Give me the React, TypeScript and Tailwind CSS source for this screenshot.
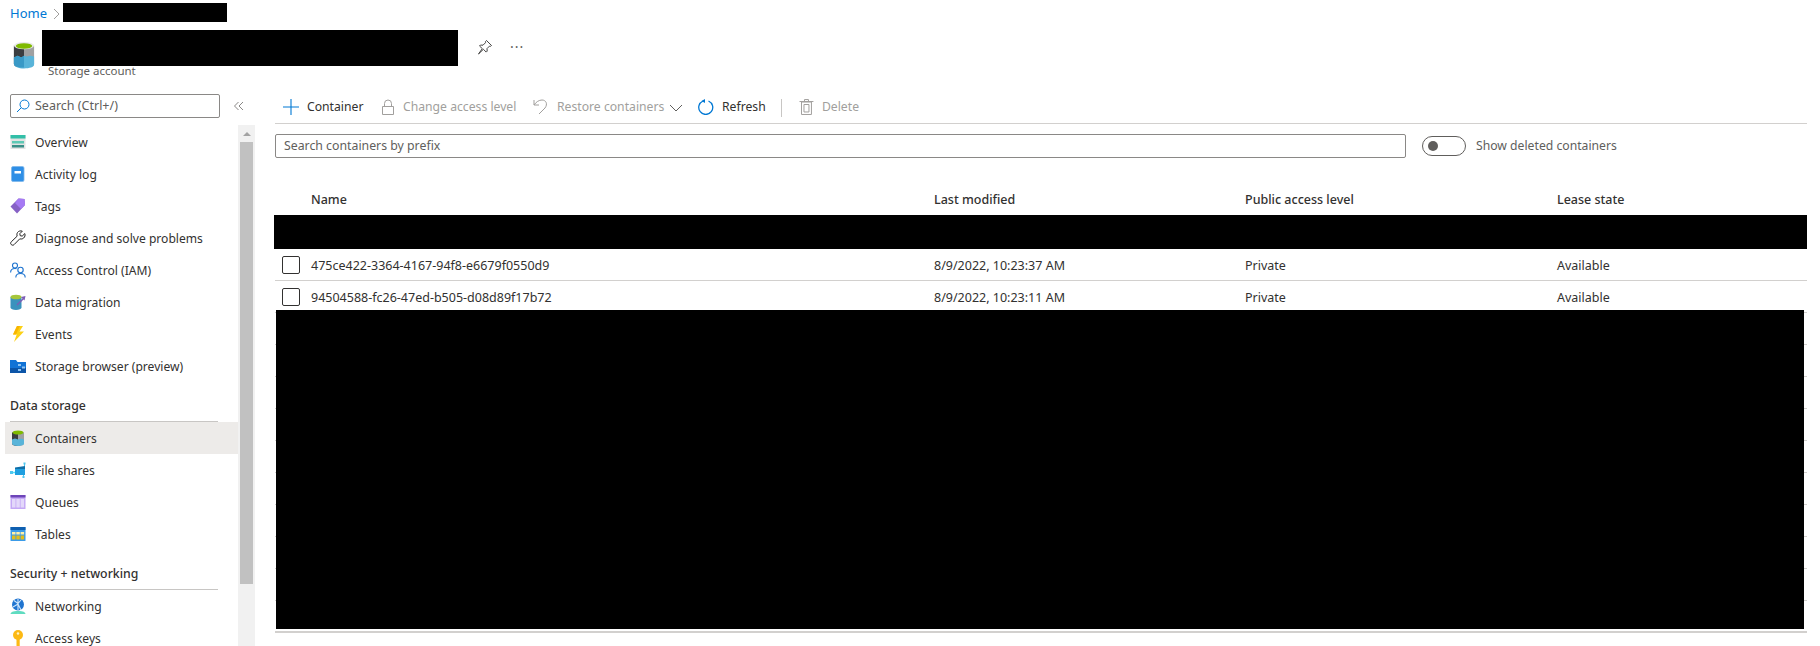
import React from "react";

const StorageIcon = ({ size = 22 }: { size?: number }) => (
  <svg width={size} height={size * 1.25} viewBox="0 0 24 30">
    <path d="M1 5v20c0 2.500 5 4 11 4s11-1.500 11-4V5z" fill="#a0a1a2" />
    <path d="M1 5v20c0 2.500 5 4 11 4V5z" fill="#3b3d40" />
    <path d="M1 18l4-2 4 2 3-2 3 1 4-1 4 1v9c0 2.500-5 4-11 4S1 27.500 1 25z" fill="#59b4d9" />
    <path d="M1 18l4-2 4 2 3-2v13C6 29 1 27.500 1 25z" fill="#3999c6" />
    <ellipse cx="12" cy="5" rx="11" ry="4" fill="#eaeaea" />
    <ellipse cx="12" cy="5.500" rx="9" ry="3" fill="#7fba00" />
  </svg>
);

const Icon = ({ children }: { children: React.ReactNode }) => (
  <svg width="16" height="16" viewBox="0 0 16 16" className="shrink-0">
    {children}
  </svg>
);

const icons: Record<string, React.ReactNode> = {
  overview: (
    <Icon>
      <rect x="0.500" y="1" width="15" height="14" fill="#e3e3e3" />
      <rect x="0.500" y="1" width="15" height="3.500" fill="#32bfa8" />
      <rect x="2" y="7" width="12" height="2.500" fill="#5ec9b5" />
      <rect x="2" y="11" width="12" height="2.500" fill="#3a8f88" />
    </Icon>
  ),
  log: (
    <Icon>
      <rect x="1.500" y="0.500" width="12.500" height="15" rx="1.500" fill="#2f8fe6" />
      <rect x="1.500" y="0.500" width="12.500" height="15" rx="1.500" fill="none" stroke="#7db6ea" strokeWidth="0.800" />
      <rect x="4.500" y="5" width="6.500" height="2.500" fill="#fff" />
    </Icon>
  ),
  tags: (
    <Icon>
      <path d="M0.500 8.500L8.500 0.500l6 .5 .5 6-8 8.500z" fill="#8661c5" />
      <path d="M8.500 0.500l6 .5 .5 6-4 4-6-6z" fill="#a67af4" />
    </Icon>
  ),
  diag: (
    <Icon>
      <path
        d="M14.800 3.600l-2.600 2.500-2-.4-.4-2 2.500-2.500c-1.700-.7-3.700-.2-4.700 1.200-.8 1.100-.9 2.500-.4 3.700L1.300 11.800c-.9.900-.9 2 0 2.800.8.800 2 .8 2.800 0l5.700-5.800c1.300.5 2.800.2 3.900-.8 1.200-1.100 1.700-2.800 1.100-4.400z"
        fill="none"
        stroke="#222"
        strokeWidth="1"
      />
    </Icon>
  ),
  iam: (
    <Icon>
      <g fill="none" stroke="#1d73cf" strokeWidth="1.100">
        <circle cx="5" cy="3.500" r="2.500" />
        <path d="M0.600 10.500c0-2.500 1.800-4 4.400-4 .6 0 1 .1 1.500.2" />
        <circle cx="10.500" cy="8" r="2.700" />
        <path d="M5.800 15.500c0-2.500 2-4 4.700-4s4.700 1.500 4.700 4" />
      </g>
    </Icon>
  ),
  migrate: (
    <Icon>
      <path d="M0.500 3v10.500C.5 15 3 16 6 16s5.500-1 5.500-2.500V3z" fill="#3a92bd" />
      <ellipse cx="6" cy="3" rx="5.500" ry="2.300" fill="#a6c63b" />
      <path d="M7 11l7-7" stroke="#7c5cb5" strokeWidth="1.500" />
      <path d="M11 3l4.500-1-1 4.500z" fill="#7c5cb5" />
    </Icon>
  ),
  events: (
    <Icon>
      <path d="M7 0h6L9.500 5.500H14L4 16l2.700-7.500H3z" fill="#fcd116" />
      <path d="M7 0h3L6 8.500H3z" fill="#f8b500" />
    </Icon>
  ),
  browser: (
    <Icon>
      <path d="M0 2h6l1.500 2H16v11H0z" fill="#1173d6" />
      <path d="M0 10h16v5H0z" fill="#0c55a8" />
      <rect x="8" y="6" width="3" height="2" fill="#8cc4f5" />
      <rect x="12" y="8.500" width="3" height="2" fill="#8cc4f5" />
      <rect x="8" y="11" width="3" height="2" fill="#8cc4f5" />
    </Icon>
  ),
  containers: (
    <Icon>
      <path d="M2 2.500v11C2 15 4.500 16 8 16s6-1 6-2.500v-11z" fill="#a0a1a2" />
      <path d="M2 2.500v11C2 15 4.500 16 8 16V2.500z" fill="#3b3d40" />
      <path d="M2 9.500l3-1 3 1 3-1 3 1v4C14 15 11.500 16 8 16s-6-1-6-2.500z" fill="#59b4d9" />
      <ellipse cx="8" cy="2.500" rx="5.500" ry="2" fill="#7fba00" />
    </Icon>
  ),
  files: (
    <Icon>
      <path d="M5 6h10v7H5z" fill="#1f9fe0" />
      <path d="M5 5.500l10-1.500v3H5z" fill="#0f6fa8" />
      <path d="M0 10.500h5" stroke="#50e6ff" strokeWidth="1.500" />
      <rect x="0" y="9" width="3" height="3" fill="#50c8f0" />
      <rect x="13.500" y="0.500" width="2" height="2" fill="#50c8f0" />
      <rect x="12.500" y="14" width="2" height="2" fill="#50c8f0" />
      <path d="M14.500 2v2M13.500 13v1.500" stroke="#50c8f0" />
    </Icon>
  ),
  queues: (
    <Icon>
      <rect x="0.500" y="1" width="15" height="14" fill="#c4a8f5" />
      <rect x="0.500" y="1" width="15" height="2.500" fill="#6d45b8" />
      <rect x="2" y="5" width="3.500" height="8.500" fill="#e3d8fa" />
      <rect x="6.300" y="5" width="3.500" height="8.500" fill="#e3d8fa" />
      <rect x="10.600" y="5" width="3.500" height="8.500" fill="#e3d8fa" />
    </Icon>
  ),
  tables: (
    <Icon>
      <rect x="0.500" y="1" width="15" height="14" rx="0.500" fill="#3b9be8" />
      <rect x="0.500" y="1" width="15" height="3" fill="#0f5fb0" />
      <rect x="2" y="6" width="3.500" height="2.500" fill="#fff1a8" />
      <rect x="6.300" y="6" width="3.500" height="2.500" fill="#fff1a8" />
      <rect x="10.600" y="6" width="3.500" height="2.500" fill="#fff1a8" />
      <rect x="2" y="9.500" width="3.500" height="4" fill="#e2bd1a" />
      <rect x="6.300" y="9.500" width="3.500" height="4" fill="#e2bd1a" />
      <rect x="10.600" y="9.500" width="3.500" height="4" fill="#e2bd1a" />
    </Icon>
  ),
  net: (
    <Icon>
      <path d="M0.500 16c.5-2 2-3 7.500-3s7 1 7.500 3z" fill="#5fdcc0" />
      <circle cx="8" cy="6.500" r="6" fill="#1f74d0" />
      <path d="M4 2.500l4 3 3-3.500M3 9l5-3 3 6M8 1v11" stroke="#cfe6fb" strokeWidth="1.100" fill="none" />
    </Icon>
  ),
  keys: (
    <Icon>
      <circle cx="8" cy="5" r="5" fill="#fcb914" />
      <rect x="6.500" y="8" width="3.200" height="8" fill="#fcb914" />
      <circle cx="8" cy="3.500" r="1.200" fill="#fff3c4" />
    </Icon>
  ),
};

const Item = ({ icon, label, active }: { icon: string; label: string; active?: boolean }) => (
  <div className={`-ml-[5px] flex h-[32px] items-center pl-[5px] ${active ? "bg-[#edebe9]" : ""}`}>
    {icons[icon]}
    <span className="ml-[9px] mt-[3px] text-[12.100px] text-[#323130]">{label}</span>
  </div>
);

const Section = ({ label }: { label: string }) => (
  <div className="mr-[20px] mt-[14px] flex h-[26px] items-center border-b border-[#c8c6c4] pb-[5px] text-[12.300px] font-medium text-[#323130]">
    {label}
  </div>
);

const Tool = ({
  icon,
  label,
  off,
  w,
}: {
  icon: React.ReactNode;
  label: string;
  off?: boolean;
  w: string;
}) => (
  <div className={`flex items-center text-[12.200px] ${w} ${off ? "text-[#a19f9d]" : "text-[#323130]"}`}>
    {icon}
    <span className="whitespace-nowrap">{label}</span>
  </div>
);

const cols = "grid grid-cols-[36px_623px_311px_312px_1fr]";

const Row = ({ name, time }: { name: string; time: string }) => (
  <div className={`${cols} h-[32px] items-center border-b border-[#d2d0ce] text-[#323130]`}>
    <span className="ml-[7px] h-[18px] w-[18px] rounded-[2px] border border-[#323130]" />
    <span className="mt-[4px]">{name}</span>
    <span className="mt-[4px]">{time}</span>
    <span className="mt-[4px]">Private</span>
    <span className="mt-[4px]">Available</span>
  </div>
);

const hiddenRows = [0, 1, 2, 3, 4, 5, 6, 7, 8];

export default function App() {
  return (
    <div
      className="h-[646px] w-[1820px] overflow-hidden bg-white text-[12.500px] text-[#323130]"
      style={{ fontFamily: '"Noto Sans", sans-serif' }}
    >
      <div className="flex h-[26px] items-center pl-[10px] text-[13px]">
        <span className="mt-[2px] text-[#0078d4]">Home</span>
        <svg width="12" height="12" viewBox="0 0 12 12" className="ml-[4px] mt-[2px]">
          <path d="M3 1l5 5-5 5" fill="none" stroke="#a19f9d" />
        </svg>
        <div className="mb-[2px] h-[19px] w-[164px] bg-black" />
      </div>

      <div className="flex h-[66px] items-start">
        <div className="ml-[13px] mt-[15px]">
          <StorageIcon />
        </div>
        <div className="ml-[7px] mt-[4px]">
          <div className="h-[36px] w-[416px] bg-black" />
          <div className="ml-[6px] mt-[-3px] text-[11.500px] leading-[16px] text-[#605e5c]">Storage account</div>
        </div>
        <svg width="16" height="16" viewBox="0 0 16 16" className="ml-[19px] mt-[13px]">
          <path
            d="M9.500 1.500l5 5-1 .8-1-.2-2.500 2.500.2 2.500-1 1-2.800-2.800L1.500 15l3.800-5.400L2.500 7l1-1 2.500.2 2.500-2.500-.1-1z"
            fill="none"
            stroke="#323130"
            strokeWidth="0.900"
          />
        </svg>
        <span className="ml-[17px] mt-[10px] text-[14px] tracking-[1px] text-[#605e5c]">···</span>
      </div>

      <div className="flex h-[554px]">
        <div className="flex w-[255px] shrink-0 flex-col">
          <div className="flex h-[33px] shrink-0 items-start">
            <div className="ml-[10px] mt-[2px] flex h-[24px] w-[210px] items-center rounded-[2px] border border-[#8a8886] pl-[5px] text-[#605e5c]">
              <svg width="14" height="14" viewBox="0 0 14 14">
                <circle cx="8.500" cy="5.500" r="4.500" fill="none" stroke="#0078d4" />
                <path d="M5.300 8.700L1 13" stroke="#0078d4" />
              </svg>
              <span className="ml-[5px] mt-[1px]">Search (Ctrl+/)</span>
            </div>
            <svg width="12" height="12" viewBox="0 0 12 12" className="ml-[13px] mt-[8px]">
              <path d="M5.500 2l-4 4 4 4M10 2L6 6l4 4" fill="none" stroke="#8a8886" />
            </svg>
          </div>
          <div className="flex min-h-0 flex-1">
            <div className="w-[238px] shrink-0 overflow-hidden pl-[10px] pt-[1px]">
              <Item icon="overview" label="Overview" />
              <Item icon="log" label="Activity log" />
              <Item icon="tags" label="Tags" />
              <Item icon="diag" label="Diagnose and solve problems" />
              <Item icon="iam" label="Access Control (IAM)" />
              <Item icon="migrate" label="Data migration" />
              <Item icon="events" label="Events" />
              <Item icon="browser" label="Storage browser (preview)" />
              <Section label="Data storage" />
              <Item icon="containers" label="Containers" active />
              <Item icon="files" label="File shares" />
              <Item icon="queues" label="Queues" />
              <Item icon="tables" label="Tables" />
              <Section label="Security + networking" />
              <Item icon="net" label="Networking" />
              <Item icon="keys" label="Access keys" />
            </div>
            <div className="flex w-[17px] shrink-0 flex-col items-center bg-[#f1f1f1]">
              <div className="flex h-[17px] w-full items-center justify-center">
                <span className="h-0 w-0 border-x-[4px] border-b-[4px] border-x-transparent border-b-[#a3a3a3]" />
              </div>
              <div className="h-[442px] w-[13px] bg-[#c1c1c1]" />
            </div>
          </div>
        </div>

        <div className="ml-[20px] w-[1532px]">
          <div className="flex h-[32px] items-center border-b border-[#d2d0ce] pl-[8px]">
            <Tool
              w="w-[97px]"
              label="Container"
              icon={
                <svg width="16" height="16" viewBox="0 0 16 16" className="mr-[8px]">
                  <path d="M8 0v16M0 8h16" stroke="#0078d4" strokeWidth="1.100" />
                </svg>
              }
            />
            <Tool
              off
              w="w-[153px]"
              label="Change access level"
              icon={
                <svg width="16" height="16" viewBox="0 0 16 16" className="mr-[7px]">
                  <path d="M2.500 7.500h11v8h-11zM4.500 7.500V4.500a3.500 3.500 0 017 0v3" fill="none" stroke="#a19f9d" />
                </svg>
              }
            />
            <Tool
              off
              w="w-[136px]"
              label="Restore containers"
              icon={
                <svg width="16" height="16" viewBox="0 0 16 16" className="mr-[8px]">
                  <path d="M1 1v5h5M1 6c2-3 5-5 8-5 4 0 6 4 3 8l-6 6" fill="none" stroke="#a19f9d" />
                </svg>
              }
            />
            <svg width="14" height="14" viewBox="0 0 14 14" className="mr-[15px]">
              <path d="M1 4l6 6 6-6" fill="none" stroke="#605e5c" />
            </svg>
            <Tool
              w="w-[83px]"
              label="Refresh"
              icon={
                <svg width="16" height="16" viewBox="0 0 16 16" className="mr-[8px]">
                  <path d="M10.500 2a7 7 0 11-5.500 0" fill="none" stroke="#0078d4" strokeWidth="1.300" />
                  <path d="M7 0L3.500 2 7 4z" fill="#0078d4" />
                </svg>
              }
            />
            <span className="mr-[17px] h-[18px] w-px bg-[#c8c6c4]" />
            <Tool
              off
              w="w-[60px]"
              label="Delete"
              icon={
                <svg width="15" height="16" viewBox="0 0 15 16" className="mr-[8px]">
                  <path d="M2.500 3h10v12.500h-10zM0.500 2.500h14M5.500 2.500v-2h4v2M5 5.500h5v7.500H5z" fill="none" stroke="#a19f9d" />
                </svg>
              }
            />
          </div>

          <div className="mt-[10px] flex items-center">
            <div className="flex h-[24px] w-[1131px] items-center rounded-[2px] border border-[#8a8886] pl-[8px] pt-[1px] text-[12.300px] text-[#605e5c]">
              Search containers by prefix
            </div>
            <div className="ml-[16px] flex h-[20px] w-[44px] items-center rounded-full border border-[#605e5c] pl-[5px]">
              <span className="h-[10px] w-[10px] rounded-full bg-[#605e5c]" />
            </div>
            <span className="ml-[10px] text-[12.200px] text-[#605e5c]">Show deleted containers</span>
          </div>

          <div className={`${cols} mt-[26px] h-[31px] items-center font-medium text-[#323130]`}>
            <span />
            <span className="mt-[2px]">Name</span>
            <span className="mt-[2px]">Last modified</span>
            <span className="mt-[2px]">Public access level</span>
            <span className="mt-[2px]">Lease state</span>
          </div>
          <div className="-ml-[1px] h-[34px] bg-black" />
          <Row name="475ce422-3364-4167-94f8-e6679f0550d9" time="8/9/2022, 10:23:37 AM" />
          <div className="relative">
            <Row name="94504588-fc26-47ed-b505-d08d89f17b72" time="8/9/2022, 10:23:11 AM" />
            {hiddenRows.map((r) => (
              <div key={r} className="h-[32px] border-b border-[#d2d0ce]" />
            ))}
            <div className="h-[32px] border-b-2 border-[#d2d0ce]" />
            <div className="absolute left-[1px] right-[3px] top-[29px] h-[319px] bg-black" />
          </div>
        </div>
      </div>
    </div>
  );
}
